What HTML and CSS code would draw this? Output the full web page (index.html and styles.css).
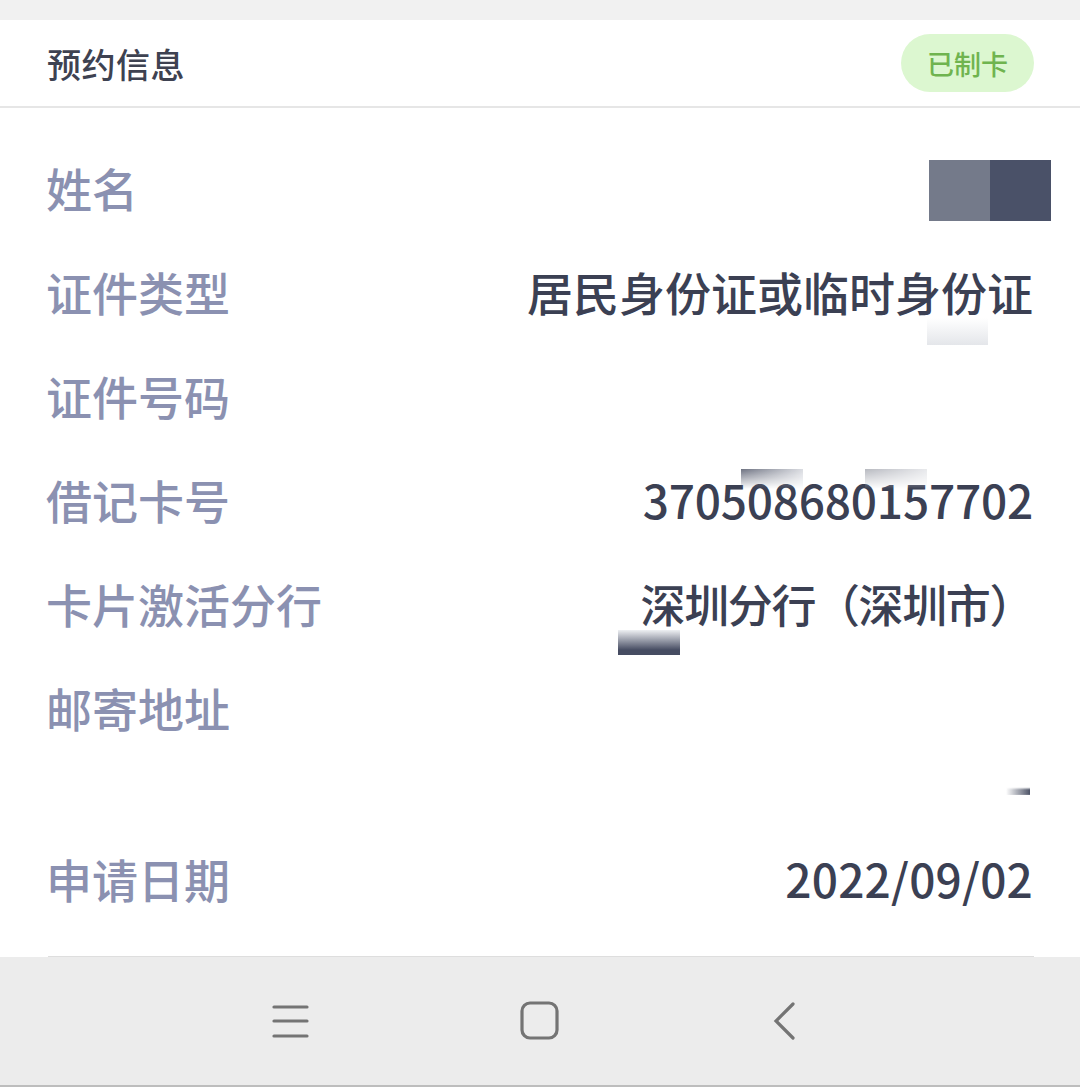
FILE: index.html
```html
<!DOCTYPE html>
<html lang="zh-CN">
<head>
<meta charset="utf-8">
<title>预约信息</title>
<link rel="stylesheet" href="styles.css">
</head>
<body>
<div class="topbar"></div>
<header class="header">
  <h1 class="title">预约信息</h1>
  <span class="badge">已制卡</span>
</header>
<main class="content">
  <div class="row">
    <span class="label">姓名</span>
    <span class="value mosaic"><i class="m1"></i><i class="m2"></i></span>
  </div>
  <div class="row">
    <span class="label">证件类型</span>
    <span class="value">居民身份证或临时身份证</span>
  </div>
  <div class="row">
    <span class="label">证件号码</span>
    <span class="value"></span>
  </div>
  <div class="row">
    <span class="label">借记卡号</span>
    <span class="value num">370508680157702</span>
  </div>
  <div class="row">
    <span class="label">卡片激活分行</span>
    <span class="value branch">深圳分行（深圳市）</span>
  </div>
  <div class="row tall">
    <span class="label">邮寄地址</span>
    <span class="value"></span>
  </div>
  <div class="row">
    <span class="label">申请日期</span>
    <span class="value num date">2022/09/02</span>
  </div>
</main>
<div class="sep"></div>
<nav class="navbar">
  <svg class="nav-icon" width="40" height="36" viewBox="0 0 40 36"><g stroke="#747474" stroke-width="3.2" stroke-linecap="round"><line x1="3" y1="4" x2="36" y2="4"/><line x1="3" y1="18" x2="36" y2="18"/><line x1="3" y1="33" x2="36" y2="33"/></g></svg>
  <svg class="nav-icon" width="40" height="40" viewBox="0 0 40 40"><rect x="2" y="2" width="35" height="35" rx="8" fill="none" stroke="#747474" stroke-width="3.2"/></svg>
  <svg class="nav-icon" width="24" height="40" viewBox="0 0 24 40"><polyline points="20,3 3,20 20,37" fill="none" stroke="#747474" stroke-width="3.2" stroke-linecap="round" stroke-linejoin="miter"/></svg>
</nav>
<div class="blur b1"></div>
<div class="blur b2"></div>
<div class="blur b3"></div>
<div class="blur b4"></div>
<div class="blur b5"></div>
</body>
</html>
```
FILE: styles.css
```css
html, body {
  margin: 0;
  padding: 0;
}
body {
  width: 1080px;
  height: 1087px;
  background: #ffffff;
  font-family: "Noto Sans CJK SC", "Noto Sans", sans-serif;
  display: flex;
  flex-direction: column;
  position: relative;
  overflow: hidden;
}
.topbar {
  height: 20px;
  background: #f1f1f1;
}
.header {
  height: 86px;
  display: flex;
  align-items: center;
  justify-content: space-between;
  padding: 0 46px 0 47px;
  border-bottom: 2px solid #e6e6e6;
}
.title {
  margin: 0;
  font-size: 34px;
  font-weight: 500;
  color: #3e4251;
  letter-spacing: 0.5px;
}
.badge {
  height: 58px;
  width: 133px;
  border-radius: 29px;
  background: #dcf7d0;
  color: #6fb44f;
  font-size: 27px;
  font-weight: 500;
  display: flex;
  align-items: center;
  justify-content: center;
}
.content {
  flex: 1;
  padding: 27px 47px 0 46px;
}
.row {
  height: 104px;
  display: flex;
  align-items: center;
  justify-content: space-between;
}
.row.tall {
  height: 171px;
  align-items: flex-start;
}
.row.tall .label {
  line-height: 104px;
}
.label {
  font-size: 46px;
  font-weight: 500;
  color: #8b91b1;
}
.value {
  font-size: 46px;
  font-weight: 500;
  color: #3b4053;
}
.value.num {
  letter-spacing: -0.2px;
}
.value.num.date {
  letter-spacing: 0.2px;
}
.value.branch {
  font-size: 45px;
  letter-spacing: -1.4px;
}
.mosaic {
  display: flex;
  margin-right: -18px;
  margin-top: 6px;
}
.mosaic i {
  display: block;
  width: 61px;
  height: 61px;
}
.mosaic .m1 { background: #747a8a; }
.mosaic .m2 { background: #4a5168; }
.sep {
  height: 1px;
  background: #dedede;
  margin: 0 46px 0 48px;
}
.navbar {
  height: 128px;
  background: #ececec;
  border-bottom: 2px solid #bdbdbd;
  display: flex;
  align-items: center;
  justify-content: center;
  padding-right: 12px;
}
.nav-icon:nth-child(1) { margin-right: 209px; }
.nav-icon:nth-child(2) { margin-right: 213px; }
.blur {
  position: absolute;
}
.b1 {
  left: 927px; top: 318px; width: 61px; height: 27px;
  background: linear-gradient(#ffffff, #e4e6ea);
}
.b2 {
  left: 741px; top: 469px; width: 62px; height: 20px;
  background: linear-gradient(to right, #5d6273, #d6d8de);
  opacity: 0.9;
  -webkit-mask: linear-gradient(#000, transparent);
  mask: linear-gradient(#000, transparent);
}
.b3 {
  left: 865px; top: 469px; width: 62px; height: 20px;
  background: linear-gradient(to right, #b7b9c0, #e8e9ec);
  -webkit-mask: linear-gradient(#000, transparent);
  mask: linear-gradient(#000, transparent);
}
.b4 {
  left: 618px; top: 630px; width: 62px; height: 25px;
  background: linear-gradient(#eef0f3, #464c62 80%);
}
.b5 {
  left: 1006px; top: 780px; width: 24px; height: 18px;
  background: linear-gradient(to right, transparent, #4d5366);
  -webkit-mask: linear-gradient(transparent 40%, #000 55%, #000 80%, transparent 85%);
  mask: linear-gradient(transparent 40%, #000 55%, #000 80%, transparent 85%);
}
```
